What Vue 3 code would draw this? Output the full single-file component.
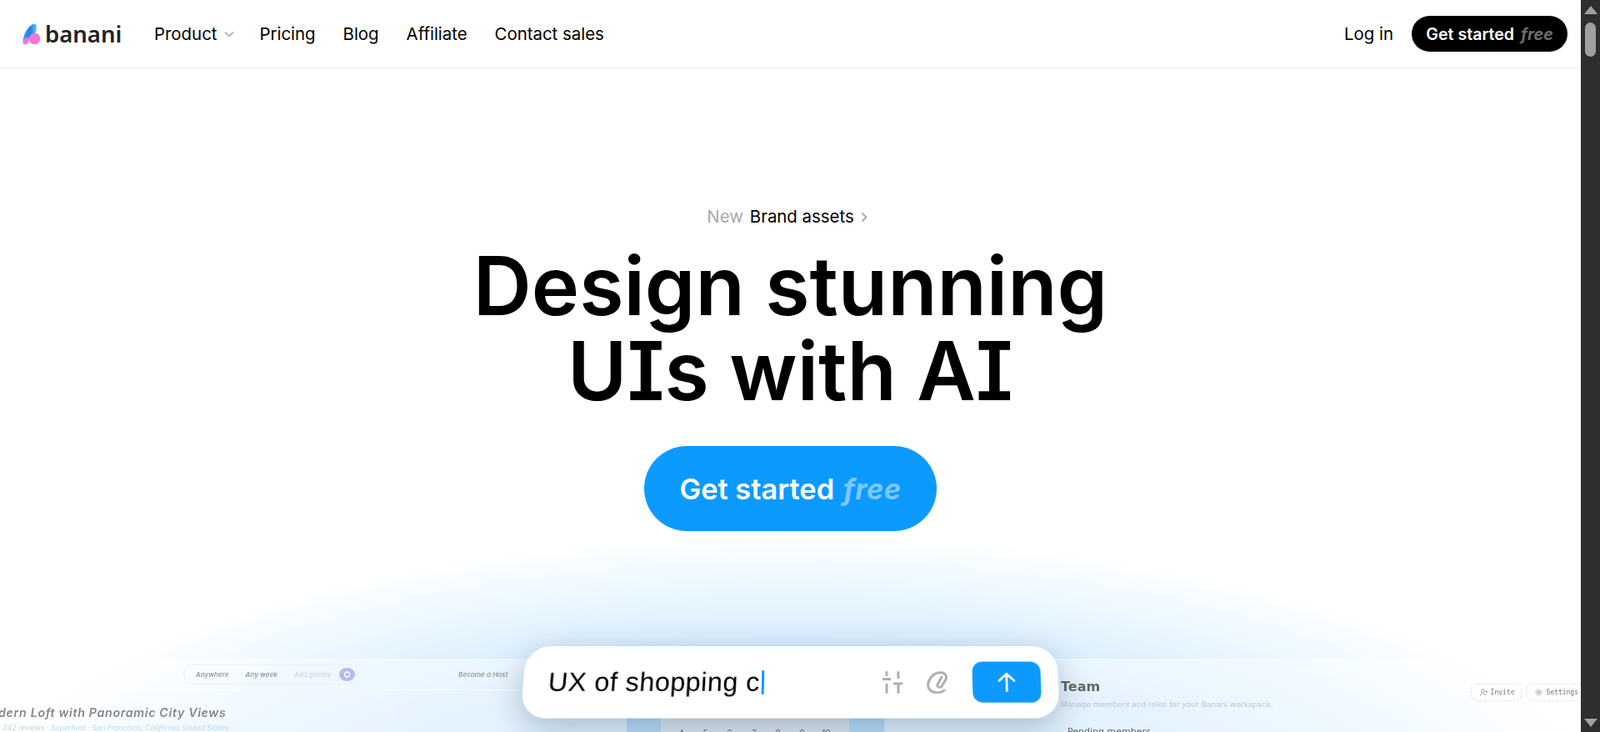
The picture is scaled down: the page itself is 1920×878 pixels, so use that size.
<template>
  <div class="page">
    <main class="main">
      <header class="nav">
        <div class="nav-left">
          <div class="logo">
            <svg class="logo-mark" width="22" height="26" viewBox="0 0 22 26">
              <defs>
                <linearGradient id="leaf" x1="0" y1="0" x2="1" y2="0">
                  <stop offset="0" stop-color="#3f9cf2" />
                  <stop offset="0.55" stop-color="#1f80ea" />
                  <stop offset="1" stop-color="#6fc6fb" />
                </linearGradient>
              </defs>
              <path d="M0.500 21C1 14 6 3 14 0.500c2-.5 3 1 3 3 0 4-1 8-3 11-3 1-6 3-8 7-2 2-5 2-5.500-.5z" fill="url(#leaf)" />
              <circle cx="14.500" cy="18.500" r="6.800" fill="#f473da" />
              <path d="M0.500 23c0-3 2-6 5-6 2 0 3 1 3 2-1 3-2 5-4 6-2 .5-4 0-4-2z" fill="#f473da" />
            </svg>
            <span class="logo-text">banani</span>
          </div>
          <nav class="links">
            <a class="link link-product">Product
              <svg class="caret" width="12" height="8" viewBox="0 0 12 8"><path d="M1 1.500l5 5 5-5" fill="none" stroke="#b5b5b5" stroke-width="1.800" /></svg>
            </a>
            <a v-for="l in links" :key="l" class="link">{{ l }}</a>
          </nav>
        </div>
        <div class="nav-right">
          <a class="link">Log in</a>
          <button class="btn-dark">Get started <em>free</em></button>
        </div>
      </header>

      <section class="hero">
        <p class="tag"><span class="tag-new">New</span> Brand assets
          <svg width="8" height="13" viewBox="0 0 8 13"><path d="M1.500 1.500l5 5-5 5" fill="none" stroke="#a8a8a8" stroke-width="1.800" /></svg>
        </p>
        <h1>Design stunning<br />UIs with AI</h1>
        <button class="btn-blue">Get started <em>free</em></button>
      </section>

      <section class="preview">
        <div class="glow"></div>
        <div class="screens">
          <div class="screen-left">
            <div class="mini-nav">
              <div class="mini-search">
                <span>Anywhere</span><i></i><span>Any week</span><i></i><span class="pale">Add guests</span>
                <b class="mini-dot"></b>
              </div>
              <span class="mini-host">Become a Host</span>
            </div>
            <div class="listing">
              <h3>Modern Loft with Panoramic City Views</h3>
              <p>4.9 · 242 reviews · <span>Superhost · San Francisco, California, United States</span></p>
            </div>
          </div>
          <div class="screen-mid">
            <div class="cal">
              <span v-for="n in days" :key="n">{{ n }}</span>
            </div>
          </div>
          <div class="screen-right">
            <div class="team-head">
              <div>
                <h3>Team</h3>
                <p>Manage members and roles for your Banani workspace.</p>
              </div>
              <div class="team-btns">
                <span class="chip">
                  <svg width="9" height="9" viewBox="0 0 9 9" fill="none" stroke="#888" stroke-width="0.800">
                    <circle cx="3.500" cy="2.500" r="1.800" /><path d="M0.500 8.500c0-2 1.500-3 3-3s3 1 3 3M6.500 3.500h2.500M7.700 2.200v2.600" />
                  </svg>
                  Invite
                </span>
                <span class="chip">
                  <svg width="9" height="9" viewBox="0 0 9 9" fill="none" stroke="#888" stroke-width="1">
                    <circle cx="4.500" cy="4.500" r="1.300" /><circle cx="4.500" cy="4.500" r="3.400" stroke-dasharray="1.300 0.800" />
                  </svg>
                  Settings
                </span>
              </div>
            </div>
            <h4>Pending members</h4>
          </div>
        </div>

        <div class="prompt">
          <span class="prompt-text">UX of shopping c</span><span class="cursor"></span>
          <div class="prompt-tools">
            <svg width="24" height="27" viewBox="0 0 24 27" fill="none" stroke="#adadad" stroke-width="3">
              <path d="M5 0v6M0 9.500h10M5 15v12M19 0v9M13 15h11M19 15v12" />
            </svg>
            <svg width="26" height="27" viewBox="0 0 26 27" fill="none" stroke="#adadad" stroke-width="3" stroke-linecap="round">
              <path d="M21 23c-3 3-9 4-14 2C2 23 0 17 3 11 6 5 11 1.500 17 1.500c5 0 8 4 6 8.500l-5 8c-2 3-6 1-5-2l5-9" />
            </svg>
            <button class="send">
              <svg width="22" height="24" viewBox="0 0 22 24" fill="none" stroke="#fff" stroke-width="2.600" stroke-linecap="round" stroke-linejoin="round">
                <path d="M11 23V2M2 10.500L11 2l9 8.500" />
              </svg>
            </button>
          </div>
        </div>
      </section>
    </main>

    <aside class="scrollbar">
      <span class="arrow up"></span>
      <span class="thumb"></span>
      <span class="arrow down"></span>
    </aside>
  </div>
</template>

<script setup>
const links = ['Pricing', 'Blog', 'Affiliate', 'Contact sales']
const days = [4, 5, 6, 7, 8, 9, 10]
</script>

<style>
html,
body {
  margin: 0;
  overflow: hidden;
  background: #fff;
}
</style>

<style scoped>
.page {
  display: flex;
  height: 878px;
  overflow: hidden;
  font-family: Inter, 'Liberation Sans', sans-serif;
  color: #000;
}

.main {
  flex: 1;
  min-width: 0;
  display: flex;
  flex-direction: column;
}

.nav {
  height: 82px;
  box-sizing: border-box;
  flex: none;
  display: flex;
  justify-content: space-between;
  align-items: center;
  padding: 0 16px 0 27px;
  border-bottom: 1px solid #ececec;
}

.nav-left,
.nav-right,
.links,
.logo {
  display: flex;
  align-items: center;
}

.logo {
  gap: 5px;
  width: 158px;
}

.logo-text {
  font-family: 'Noto Sans', sans-serif;
  font-size: 27.500px;
  line-height: 30px;
  font-weight: 600;
  color: #222;
}

.links {
  gap: 33px;
}

.link {
  font-size: 20.4px;
  font-weight: 400;
  display: flex;
  align-items: center;
  gap: 9px;
}

.link-product {
  margin-right: -3px;
}

.nav-right {
  gap: 22px;
}

.btn-dark {
  height: 43px;
  width: 187px;
  border: 0;
  border-radius: 22px;
  background: #000;
  color: #fff;
  font: 600 19.6px Inter, sans-serif;
  padding: 0;
}

.btn-dark em {
  color: #6d6d6d;
  font-weight: 700;
  margin-left: 3px;
}

.hero {
  flex: none;
  display: flex;
  flex-direction: column;
  align-items: center;
  padding-top: 166px;
}

.tag {
  margin: 0 8px 0 0;
  font-size: 20.4px;
  line-height: 24px;
  display: flex;
  align-items: center;
  gap: 8px;
}

.tag-new {
  color: #a9a9a9;
}

h1 {
  margin: 20px 0 0;
  font-size: 97px;
  line-height: 102px;
  font-weight: 600;
  text-align: center;
  font-feature-settings: 'cv08', 'ss02';
}

.btn-blue {
  margin-top: 39px;
  width: 351px;
  height: 102px;
  border: 0;
  border-radius: 51px;
  background: #0c9aff;
  color: #fff;
  font: 600 34.4px Inter, sans-serif;
  padding: 0;
}

.btn-blue em {
  color: #7cc8ff;
  font-weight: 700;
  letter-spacing: 0.5px;
  margin-left: 2px;
}

.preview {
  position: relative;
  flex: 1;
  min-height: 0;
}

.glow {
  position: absolute;
  left: 50%;
  top: 4px;
  width: 2000px;
  height: 720px;
  margin-left: -1000px;
  border-radius: 50%;
  background: radial-gradient(closest-side, #b8deff 0%, #d2ebff 60%, #eef8ff 85%, rgba(255, 255, 255, 0) 100%);
}

.screens {
  position: absolute;
  left: 0;
  right: 0;
  top: 153px;
  height: 200px;
  display: flex;
  background: rgba(255, 255, 255, 0.45);
}

.screen-left {
  width: 752px;
  flex: none;
}

.mini-nav {
  height: 37px;
  display: flex;
  align-items: center;
  border-bottom: 1px solid rgba(255, 255, 255, 0.7);
  font: italic 500 8.200px Inter, sans-serif;
  color: #8a8f96;
  padding-left: 220px;
  white-space: nowrap;
  filter: blur(0.4px);
}

.mini-search {
  height: 24px;
  width: 210px;
  box-sizing: border-box;
  border: 1px solid #e8eff7;
  border-radius: 12px;
  display: flex;
  align-items: center;
  gap: 10px;
  padding: 0 3px 0 14px;
}

.mini-search i {
  width: 1px;
  height: 12px;
  background: #e3ecf5;
}

.pale {
  color: #c8d6ea;
}

.mini-dot {
  flex: none;
  margin-left: auto;
  margin-right: 3px;
  width: 19px;
  height: 16px;
  border-radius: 50%;
  background: radial-gradient(circle, #b6bbee 0 2px, #fff 2.500px 3.500px, #b6bbee 4px);
}

.mini-host {
  margin-left: 120px;
}

.listing {
  margin-left: -25px;
  filter: blur(0.3px);
}

.listing h3 {
  margin: 18px 0 3px;
  font: italic 600 14.2px/18px Inter, sans-serif;
  letter-spacing: 0.68px;
  color: #84888c;
  white-space: nowrap;
}

.listing p {
  margin: 0 0 0 8px;
  font: italic 8.700px/12px Inter, sans-serif;
  color: #c6d2dc;
  white-space: nowrap;
}

.listing p span {
  color: #bcdaf0;
}

.screen-mid {
  width: 309px;
  flex: none;
  background: #dde8f0;
  border-left: 41px solid #b8ddf9;
  border-right: 42px solid #b8ddf9;
  box-sizing: border-box;
  margin-top: 40px;
}

.cal {
  display: flex;
  padding: 43px 0 0 10px;
  font-size: 10px;
  line-height: 12px;
  color: #666;
}

.cal span {
  width: 29px;
  text-align: center;
}

.screen-right {
  flex: 1;
  min-width: 0;
  padding: 24px 0 0 212px;
  font-family: 'DejaVu Sans', sans-serif;
  filter: blur(0.3px);
}

.team-head {
  display: flex;
  justify-content: space-between;
}

.team-head h3 {
  margin: 0 0 5px;
  font-size: 16px;
  line-height: 20px;
  color: #666;
}

.team-head p {
  margin: 0;
  font-size: 9.100px;
  line-height: 12px;
  color: #bcc6d0;
  white-space: nowrap;
}

.team-btns {
  display: flex;
  gap: 5px;
  height: 21px;
  margin-top: 6px;
  margin-right: -6px;
}

.chip {
  display: flex;
  align-items: center;
  gap: 4px;
  border: 1px dashed #dbe3ea;
  border-radius: 8px;
  padding: 0 8px 0 10px;
  font: 8px 'DejaVu Sans Mono', monospace;
  color: #777;
  white-space: nowrap;
}

.screen-right h4 {
  margin: 20px 0 0 8px;
  font-size: 11px;
  font-weight: 500;
  color: #666;
}

.prompt {
  position: absolute;
  left: 628px;
  top: 137px;
  width: 642px;
  height: 88px;
  box-sizing: border-box;
  background: #fff;
  border-radius: 30px;
  box-shadow: 0 12px 40px rgba(40, 70, 100, 0.32);
  display: flex;
  align-items: center;
  padding-left: 30px;
  transform: perspective(1000px) rotateX(11deg) skewX(-1deg);
}

.prompt-text {
  display: inline-block;
  font-family: 'Liberation Sans', sans-serif;
  font-size: 32.500px;
  letter-spacing: 0.4px;
  transform: skewX(-1deg);
}

.cursor {
  width: 3.500px;
  height: 29px;
  margin-left: 2px;
  background: #0c9aff;
}

.prompt-tools {
  margin-left: auto;
  display: flex;
  align-items: center;
  gap: 29px;
  padding-right: 21px;
}

.send {
  width: 82px;
  height: 50px;
  border: 0;
  border-radius: 12px;
  background: #0c9aff;
  display: flex;
  align-items: center;
  justify-content: center;
  padding: 0;
}

.scrollbar {
  width: 23px;
  flex: none;
  background: #2e2e2e;
  display: flex;
  justify-content: center;
  position: relative;
}

.arrow {
  width: 0;
  height: 0;
  border-left: 8px solid transparent;
  border-right: 8px solid transparent;
  position: absolute;
}

.up {
  top: 7px;
  border-bottom: 10px solid #a0a0a0;
}

.down {
  bottom: 6px;
  border-top: 10px solid #a0a0a0;
}

.thumb {
  position: absolute;
  top: 27px;
  width: 13px;
  height: 41px;
  border-radius: 7px;
  background: #9f9f9f;
}
</style>
